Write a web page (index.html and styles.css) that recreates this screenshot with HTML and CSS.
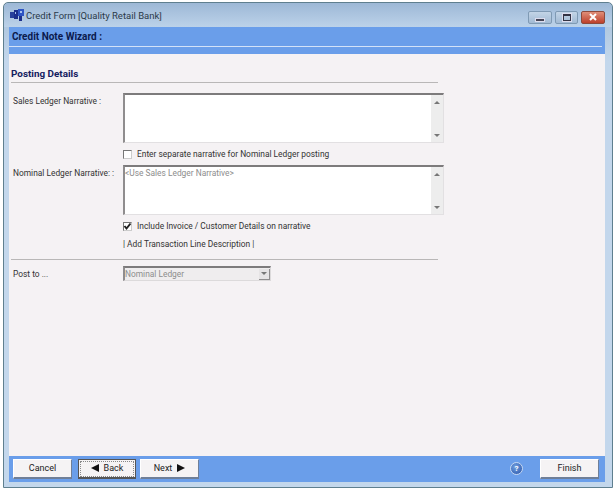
FILE: index.html
```html
<!DOCTYPE html>
<html lang="en">
<head>
    <meta charset="UTF-8">
    <meta name="viewport" content="width=device-width, initial-scale=1.0">
    <title>Credit Form</title>
    <link rel="stylesheet" href="styles.css">
</head>
<body>
    <div class="window">
        <!-- Title bar -->
        <div class="titlebar">
            <svg class="app-icon" width="14" height="12" viewBox="0 0 14 12">
                <rect x="0" y="3" width="4" height="6" fill="#27409c"/>
                <rect x="4" y="1" width="4" height="9" fill="#1c2f8c"/>
                <rect x="8" y="0" width="6" height="7" fill="#2f55c4"/>
                <rect x="9" y="7" width="3" height="5" fill="#1c2f8c"/>
                <rect x="5" y="3" width="1" height="2" fill="#a9c2f0"/>
                <rect x="10" y="2" width="2" height="2" fill="#a9c2f0"/>
            </svg>
            <span class="title-text">Credit Form [Quality Retail Bank]</span>
            <div class="win-buttons">
                <div class="win-btn win-min"><span class="min-glyph"></span></div>
                <div class="win-btn win-max"><span class="max-glyph"></span></div>
                <div class="win-btn win-close">
                    <svg width="10" height="8" viewBox="0 0 10 8"><path d="M2 1 L8 7 M8 1 L2 7" stroke="#fff" stroke-width="2"/></svg>
                </div>
            </div>
        </div>

        <div class="client">
            <!-- Wizard header -->
            <div class="wizard-head">
                <div class="wizard-title">Credit Note Wizard :</div>
            </div>

            <!-- Form -->
            <div class="content">
                <h2 class="section-title">Posting Details</h2>

                <div class="row row-sales">
                    <label class="field-label">Sales Ledger Narrative :</label>
                    <div class="memo">
                        <div class="memo-text"></div>
                        <div class="scroll"><span class="arrow-up"></span><span class="arrow-down"></span></div>
                    </div>
                </div>

                <div class="row row-check">
                    <span></span>
                    <div class="check-line"><span class="check"></span>Enter separate narrative for Nominal Ledger posting</div>
                </div>

                <div class="row row-nominal">
                    <label class="field-label">Nominal Ledger Narrative: :</label>
                    <div class="memo">
                        <div class="memo-text muted">&lt;Use Sales Ledger Narrative&gt;</div>
                        <div class="scroll"><span class="arrow-up"></span><span class="arrow-down"></span></div>
                    </div>
                </div>

                <div class="row row-check2">
                    <span></span>
                    <div class="check-line">
                        <span class="check">
                            <svg width="9" height="9" viewBox="0 0 9 9"><path d="M1.5 4 L3.5 6.5 L7.5 1.5" fill="none" stroke="#222" stroke-width="2"/></svg>
                        </span>Include Invoice / Customer Details on narrative
                    </div>
                </div>

                <div class="row row-link">
                    <span></span>
                    <div class="link-line">| Add Transaction Line Description |</div>
                </div>

                <div class="rule"></div>

                <div class="row row-post">
                    <label class="field-label">Post to ...</label>
                    <div class="select">
                        <span class="select-text">Nominal Ledger</span>
                        <span class="select-btn"><span class="arrow-down"></span></span>
                    </div>
                </div>
            </div>

            <!-- Footer buttons -->
            <div class="footer">
                <button class="btn btn-cancel">Cancel</button>
                <button class="btn btn-back"><span class="tri-left"></span>Back</button>
                <button class="btn btn-next">Next<span class="tri-right"></span></button>
                <div class="spacer"></div>
                <div class="help">?</div>
                <button class="btn btn-finish">Finish</button>
            </div>
        </div>
    </div>
</body>
</html>
```

FILE: styles.css
```css
html, body {
    margin: 0;
    height: 100%;
}

body {
    background: #fff;
    font-family: Roboto, "Liberation Sans", Arial, sans-serif;
    font-size: 8.4px;
    color: #333;
    overflow: hidden;
}

.window {
    box-sizing: border-box;
    width: 610px;
    height: 486px;
    margin: 2px 0 0 3px;
    padding: 0 7px 5px 5px;
    display: flex;
    flex-direction: column;
    background: linear-gradient(#a4bdd8, #c3d7ec 12%, #c3d7ec);
    border: 1px solid #5f7f8f;
    border-radius: 5px 5px 0 0;
}

/* Title bar */
.titlebar {
    height: 24px;
    flex: none;
    display: flex;
    align-items: center;
    background: linear-gradient(#9db8d6, #bcd2e9);
    margin: 0 -7px 0 -5px;
    padding: 0 7px 0 6px;
    border-radius: 5px 5px 0 0;
}

.app-icon {
    margin-right: 2px;
}

.title-text {
    font-size: 9.5px;
    color: #2b3a4a;
}

.win-buttons {
    margin-left: auto;
    display: flex;
    gap: 3px;
    margin-top: 4px;
}

.win-btn {
    height: 13px;
    box-sizing: border-box;
    display: flex;
    align-items: center;
    justify-content: center;
    border: 1px solid #7f9ab4;
    border-radius: 2px;
    background: linear-gradient(#c3d5e7, #a2bad4);
}

.win-min { width: 24px; }
.win-max { width: 23px; }

.win-close {
    width: 24px;
    background: linear-gradient(#e08e78, #bd3f2b);
    border-color: #8d4a3c;
}

.min-glyph {
    width: 8px;
    height: 2px;
    margin-top: 5px;
    background: #445;
    border: 0;
    outline: 1px solid #dde;
}

.max-glyph {
    width: 6px;
    height: 4px;
    border: 1px solid #334;
    border-top-width: 2px;
    outline: 1px solid #dde;
}

/* Client area */
.client {
    flex: 1;
    display: flex;
    flex-direction: column;
    background: #f5f2f4;
}

.wizard-head {
    height: 27px;
    flex: none;
    box-sizing: border-box;
    background: #6a9eea;
    padding-right: 3px;
}

.wizard-title {
    box-sizing: border-box;
    height: 20px;
    padding: 4px 0 0 3px;
    font-size: 10px;
    font-weight: bold;
    color: #0c1a4d;
    border-bottom: 1px solid #d3e2f8;
}

.content {
    flex: 1;
    padding: 0 0 0 2px;
}

.section-title {
    width: 427px;
    height: 29px;
    box-sizing: border-box;
    margin: 0 0 10px;
    padding-top: 14px;
    font-size: 9.9px;
    line-height: 12px;
    font-weight: bold;
    color: #14205f;
    border-bottom: 1px solid #b9b7b7;
}

.row {
    display: grid;
    grid-template-columns: 112px 1fr;
}

.field-label {
    padding: 3px 0 0 2px;
    line-height: 11px;
    white-space: nowrap;
}

.memo {
    box-sizing: border-box;
    width: 321px;
    height: 50px;
    display: flex;
    background: #fff;
    border: 1px solid #e2e0e2;
    border-top: 2px solid #7d7b7c;
    border-left: 2px solid #8f8d8e;
}

.memo-text {
    flex: 1;
    padding: 1px 0;
    line-height: 11px;
}

.muted {
    color: #8d8d8d;
}

.scroll {
    width: 12px;
    display: flex;
    flex-direction: column;
    align-items: center;
    justify-content: space-between;
    padding: 6px 0 5px;
    background: #ededed;
}

.arrow-up {
    border-left: 3px solid transparent;
    border-right: 3px solid transparent;
    border-bottom: 3px solid #777;
}

.arrow-down {
    border-left: 3px solid transparent;
    border-right: 3px solid transparent;
    border-top: 3px solid #777;
}

.row-check {
    margin-top: 6px;
    height: 16px;
}

.row-check2 {
    margin-top: 6px;
}

.check-line {
    display: flex;
    align-items: center;
    height: 11px;
    line-height: 11px;
}

.check {
    box-sizing: border-box;
    width: 9px;
    height: 9px;
    margin-right: 5px;
    display: flex;
    background: #fff;
    border: 1px solid #777;
    border-right-color: #ccc;
    border-bottom-color: #ccc;
}

.check svg {
    margin: -1px;
    flex: none;
}

.row-link {
    margin-top: 7px;
}

.link-line {
    line-height: 11px;
}

.rule {
    width: 427px;
    margin: 9px 0 6px;
    border-top: 1px solid #b9b7b7;
}

.select {
    box-sizing: border-box;
    width: 148px;
    height: 15px;
    display: flex;
    align-items: center;
    justify-content: space-between;
    border: 1px solid #dcdadb;
    border-top: 2px solid #7d7b7c;
    border-left: 2px solid #8f8d8e;
    background: #efedee;
    color: #8d8d8d;
}

.select-btn {
    width: 11px;
    height: 11px;
    display: flex;
    align-items: center;
    justify-content: center;
    background: #e6e4e5;
    border-right: 1px solid #8f8d8e;
    border-bottom: 1px solid #8f8d8e;
    box-sizing: border-box;
}

/* Footer */
.footer {
    height: 26px;
    flex: none;
    box-sizing: border-box;
    display: flex;
    align-items: center;
    padding: 0 6px 1px 4px;
    background: #6a9eea;
}

.btn {
    box-sizing: border-box;
    height: 20px;
    padding: 0;
    display: flex;
    align-items: center;
    justify-content: center;
    font-family: inherit;
    font-size: 9px;
    color: #222;
    background: #f5f3f4;
    border: 1px solid #fff;
    border-right-color: #6f7f98;
    border-bottom: 2px solid #6f7f98;
}

.btn-cancel { width: 59px; }
.btn-next { width: 59px; margin-left: 4px; }
.btn-finish { width: 59px; }

.btn-back {
    width: 58px;
    margin-left: 6px;
    border: 1px solid #555;
    border-bottom-width: 2px;
    outline: 1px dotted #888;
    outline-offset: -3px;
}

.tri-left {
    margin-right: 5px;
    border-top: 4px solid transparent;
    border-bottom: 4px solid transparent;
    border-right: 8px solid #111;
}

.tri-right {
    margin-left: 5px;
    border-top: 4px solid transparent;
    border-bottom: 4px solid transparent;
    border-left: 8px solid #111;
}

.spacer {
    flex: 1;
}

.help {
    width: 11px;
    height: 11px;
    margin-right: 17px;
    border-radius: 50%;
    background: radial-gradient(circle at 40% 35%, #6f9ee0, #2a55a8);
    border: 1px solid #c6d8f2;
    color: #fff;
    font-size: 8px;
    font-weight: bold;
    line-height: 11px;
    text-align: center;
}
```
